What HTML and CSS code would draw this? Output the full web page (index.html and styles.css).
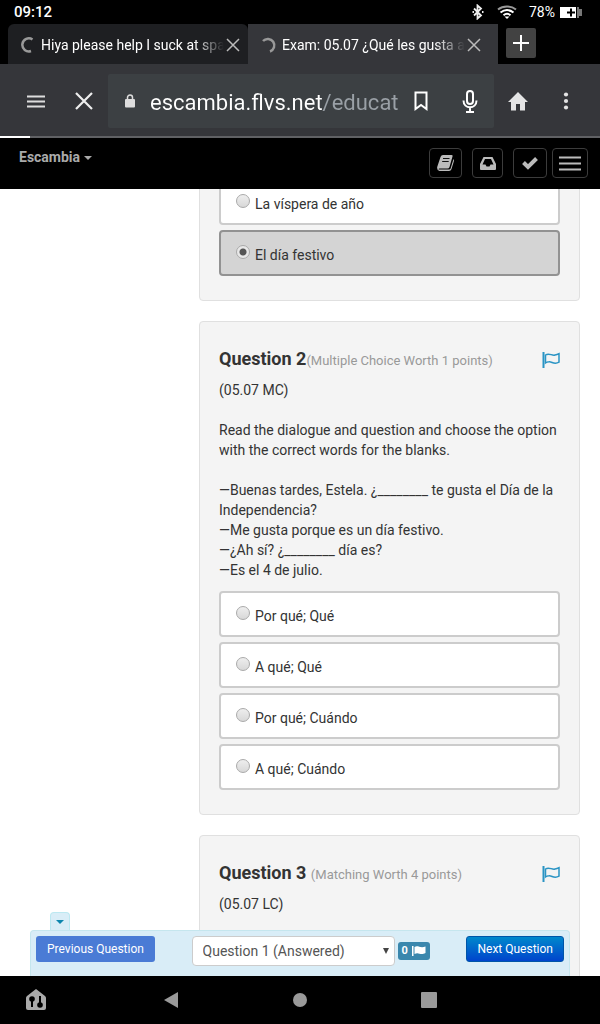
FILE: index.html
```html
<!DOCTYPE html>
<html lang="en">
<head>
    <title>Exam: 05.07 ¿Qué les gusta a...</title>
    <meta charset="UTF-8">
    <meta name="viewport" content="width=device-width, initial-scale=1.0">
    <link rel="stylesheet" href="styles.css">
</head>
<body>
    <div class="status-bar">
        <span class="clock">09:12</span>
        <svg class="bluetooth" width="12" height="16" viewBox="0 0 12 16" fill="none" stroke="#eee" stroke-width="1.800"><path d="M2 4.500l7 7-3.500 3V1.500l3.500 3-7 7"/><path d="M.5 8h1.500M10 8h1.500"/></svg>
        <svg class="wifi" width="20" height="14" viewBox="0 0 20 14" fill="none" stroke="#fff" stroke-width="2"><path stroke="#999" d="M1 4.500c5-4 13-4 18 0"/><path d="M3.500 7.500c4-3 9-3 13 0M6.500 10.300c2-1.700 5-1.700 7 0"/><path fill="#fff" stroke="none" d="M7.500 11.500h5L10 14z"/></svg>
        <span class="battery-text">78%</span>
        <svg width="22" height="11" viewBox="0 0 22 11"><path fill="#fff" d="M0 0h16v11H0z"/><path fill="#777" d="M17 0h2v2h3v7h-3v2h-2z"/><path stroke="#000" stroke-width="2" d="M7 5.500h8M11 1.500v8"/></svg>
    </div>

    <div class="tab-bar">
        <div class="tab">
            <svg class="spinner" width="16" height="16" viewBox="0 0 16 16" fill="none" stroke="#999" stroke-width="2.500"><path d="M12.500 2.500A6.500 6.500 0 1 0 11 14"/></svg>
            <span class="tab-title">Hiya please help I suck at spa</span>
            <button class="tab-close" aria-label="Close tab"><svg width="14" height="14" viewBox="0 0 14 14" stroke="#bbb" stroke-width="1.500"><path d="M1 1l12 12M13 1L1 13"/></svg></button>
        </div>
        <div class="tab active">
            <svg class="spinner" width="16" height="16" viewBox="0 0 16 16" fill="none" stroke="#999" stroke-width="2.500"><path d="M2 4A6.500 6.500 0 1 1 9 14.500"/></svg>
            <span class="tab-title">Exam: 05.07 ¿Qué les gusta a</span>
            <button class="tab-close" aria-label="Close tab"><svg width="14" height="14" viewBox="0 0 14 14" stroke="#bbb" stroke-width="1.500"><path d="M1 1l12 12M13 1L1 13"/></svg></button>
        </div>
        <button class="new-tab" aria-label="New tab"><svg width="16" height="16" viewBox="0 0 16 16" stroke="#fff" stroke-width="2"><path d="M0 8h16M8 0v16"/></svg></button>
    </div>

    <div class="toolbar">
        <button class="tool" aria-label="Menu"><svg width="18" height="13" viewBox="0 0 18 13" stroke="#ddd" stroke-width="2"><path d="M0 1.500h18M0 6.500h18M0 11.500h18"/></svg></button>
        <button class="tool" aria-label="Stop loading"><svg width="18" height="18" viewBox="0 0 18 18" stroke="#eee" stroke-width="2.200"><path d="M1 1l16 16M17 1L1 17"/></svg></button>
        <div class="address">
            <svg class="lock" width="10" height="14" viewBox="0 0 10 14"><path fill="none" stroke="#ddd" stroke-width="1.500" d="M2.500 6V3.500a2.500 2.500 0 0 1 5 0V6"/><rect y="5" width="10" height="8.500" rx="1" fill="#ddd"/></svg>
            <input class="url" type="text" aria-label="Address" value="escambia.flvs.net/educat">
            <button class="bookmark" aria-label="Bookmark"><svg width="14" height="20" viewBox="0 0 14 20" fill="none" stroke="#fff" stroke-width="2"><path d="M1.500 1.500h11v16.500L7 14l-5.500 4z"/></svg></button>
            <button class="mic" aria-label="Voice search"><svg width="16" height="23" viewBox="0 0 16 23" fill="none" stroke="#fff" stroke-width="2"><rect x="5" y="1" width="6" height="13" rx="3"/><path d="M1.500 10.500c0 9 13 9 13 0M8 17v5M4 22h8"/></svg></button>
        </div>
        <button class="tool" aria-label="Home"><svg width="20" height="19" viewBox="0 0 20 19" fill="#e4e4e4"><path d="M10 0l10 10h-3v8.500h-5V12H8v6.500H3V10H0z"/></svg></button>
        <button class="tool" aria-label="More"><svg width="6" height="18" viewBox="0 0 6 18" fill="#e4e4e4"><circle cx="3" cy="2.500" r="2.100"/><circle cx="3" cy="9" r="2.100"/><circle cx="3" cy="15.500" r="2.100"/></svg></button>
    </div>
    <div class="progress"><div class="progress-fill"></div></div>

    <nav class="site-nav">
        <a class="brand" href="#">Escambia <span class="caret"></span></a>
        <button class="nav-button book" aria-label="Lessons"><svg width="17" height="16" viewBox="0 0 17 16"><path fill="#bbb" d="M6 0h8.500q1.500 0 1 1.500L12.500 12q-.5 1.500-2 1.500H2.500q-1.200 0-.8 1H12q1.200 0 1.600-1L16.500 4q.8 1 .3 2.500L14.500 14q-.6 2-2.500 2H2.500Q-.3 15.500.2 12L3.500 2Q4.200 0 6 0z"/><path stroke="#111" d="M6 3.500h6.500M5.200 6.500h6.500"/></svg></button>
        <button class="nav-button" aria-label="Inbox"><svg width="16" height="13" viewBox="0 0 16 13"><path fill="#bbb" fill-rule="evenodd" d="M3.500 0h9L16 7v5q0 1-1 1H1q-1 0-1-1V7zM5 2L2.500 7.500h3l1 2h3l1-2h3L11 2z"/></svg></button>
        <button class="nav-button check" aria-label="Assessments"><svg width="16" height="13" viewBox="0 0 16 13" fill="none" stroke="#bbb" stroke-width="4"><path d="M1.500 5.500L6 10l8.500-8.500"/></svg></button>
        <button class="nav-button menu" aria-label="Menu"><svg width="22" height="15" viewBox="0 0 22 15" stroke="#bbb" stroke-width="2"><path d="M0 1.500h22M0 7.500h22M0 13.500h22"/></svg></button>
    </nav>

    <main class="page">
        <div class="question-list">
            <section class="question first">
                <label class="option"><input type="radio" name="q1"> <span>La víspera de año</span></label>
                <label class="option selected"><input type="radio" name="q1" checked> <span>El día festivo</span></label>
            </section>

            <section class="question">
                <header class="question-header">
                    <h2>Question 2<small>(Multiple Choice Worth 1 points)</small></h2>
                    <button class="flag" aria-label="Flag question 2"><svg width="18" height="16" viewBox="0 0 18 16" fill="none" stroke="#2a94c4" stroke-width="1.500"><path stroke-width="2" d="M1.500 0v16"/><path d="M3.500 3C7 .5 10 4 13 3q2-.2 4-1.300v8.500c-5 3-7-.8-10-.4q-2 .2-3.500 1.200z"/></svg></button>
                </header>
                <p>(05.07 MC)</p>
                <p>Read the dialogue and question and choose the option with the correct words for the blanks.</p>
                <p>—Buenas tardes, Estela. ¿________ te gusta el Día de la Independencia?<br>
                —Me gusta porque es un día festivo.<br>
                —¿Ah sí? ¿________ día es?<br>
                —Es el 4 de julio.</p>
                <div class="options">
                    <label class="option"><input type="radio" name="q2"> <span>Por qué; Qué</span></label>
                    <label class="option"><input type="radio" name="q2"> <span>A qué; Qué</span></label>
                    <label class="option"><input type="radio" name="q2"> <span>Por qué; Cuándo</span></label>
                    <label class="option"><input type="radio" name="q2"> <span>A qué; Cuándo</span></label>
                </div>
            </section>

            <section class="question last">
                <header class="question-header">
                    <h2>Question 3 <small>(Matching Worth 4 points)</small></h2>
                    <button class="flag" aria-label="Flag question 3"><svg width="18" height="16" viewBox="0 0 18 16" fill="none" stroke="#2a94c4" stroke-width="1.500"><path stroke-width="2" d="M1.500 0v16"/><path d="M3.500 3C7 .5 10 4 13 3q2-.2 4-1.300v8.500c-5 3-7-.8-10-.4q-2 .2-3.500 1.200z"/></svg></button>
                </header>
                <p>(05.07 LC)</p>
            </section>
        </div>

        <!-- question navigator, stays over the scrolled questions -->
        <div class="dock">
            <button class="dock-toggle" aria-label="Collapse"><span class="caret"></span></button>
            <div class="dock-bar">
                <button class="dock-button previous">Previous Question</button>
                <div class="jump">
                    <select aria-label="Go to question">
                        <option>Question 1 (Answered)</option>
                        <option>Question 2</option>
                        <option>Question 3</option>
                    </select>
                    <span class="badge">0 <svg width="14" height="10" viewBox="0 0 14 10" fill="#fff"><path d="M0 0h1.500v10H0zM2.500 1C6-1 8 2.500 13.500.5V7C8 10 7 5.500 2.500 8z"/></svg></span>
                </div>
                <button class="dock-button next">Next Question</button>
            </div>
        </div>
    </main>

    <div class="android-nav">
        <button class="controls" aria-label="Home controls"><svg width="22" height="22" viewBox="0 0 22 22"><path fill="#aaa" d="M11 0l9 7q1 1 1 2v10q0 2-2 2H3q-2 0-2-2V9q0-1 1-2z"/><path stroke="#000" stroke-width="2" d="M7 10v8M15 7v9"/><circle cx="7" cy="10" r="2.800"/><circle cx="15" cy="16" r="2.800"/></svg></button>
        <button aria-label="Back"><svg width="16" height="16" viewBox="0 0 16 16" fill="#999"><path d="M15 0v16L1 8z"/></svg></button>
        <button aria-label="Home"><svg width="16" height="16" viewBox="0 0 16 16" fill="#999"><circle cx="8" cy="8" r="7"/></svg></button>
        <button aria-label="Recent apps"><svg width="16" height="16" viewBox="0 0 16 16" fill="#999"><rect width="16" height="16" rx="1"/></svg></button>
    </div>
</body>
</html>
```
FILE: styles.css
```css
* { box-sizing: border-box; }
body {
    margin: 0;
    height: 100vh;
    display: flex;
    flex-direction: column;
    overflow: hidden;
    background: #fff;
    color: #333;
    font: 14px/20px Roboto, Arial, sans-serif;
}
button { display: flex; align-items: center; justify-content: center; margin: 0; padding: 0; border: 0; background: none; font: inherit; cursor: pointer; }
svg { flex: none; }

/* Android status bar */
.status-bar { display: flex; align-items: center; height: 24px; padding: 0 18px 0 14px; background: #000; color: #fff; flex: none; }
.clock { flex: 1; font-size: 15px; font-weight: 500; }
.bluetooth { margin-right: 13px; }
.wifi { margin-right: 12px; }
.battery-text { margin-right: 5px; }

/* browser tabs */
.tab-bar { display: flex; height: 40px; padding-left: 8px; background: #000; flex: none; }
.tab { display: flex; align-items: center; flex: 0 1 240px; min-width: 0; padding: 2px 8px 0 12px; background: #1e1f22; border-radius: 6px 6px 0 0; color: #fff; }
.tab.active { flex-basis: 250px; padding-left: 13px; padding-right: 17px; background: #35363a; border-radius: 0; }
.spinner { margin-right: 5px; }
.tab-title { flex: 1; min-width: 0; overflow: hidden; white-space: nowrap; -webkit-mask-image: linear-gradient(to left, transparent, #000 30px); mask-image: linear-gradient(to left, transparent, #000 30px); }
.tab-close { margin-left: 2px; }
.new-tab { width: 30px; height: 30px; margin: 4px 0 0 8px; background: #424242; border-radius: 2px; }

/* browser toolbar */
.toolbar { display: flex; align-items: center; height: 72px; padding: 2px 10px 0 12px; background: #35363a; flex: none; }
.tool { width: 48px; height: 48px; flex: none; }
.address { display: flex; align-items: center; flex: 1; min-width: 0; height: 54px; padding: 0 16px 0 17px; background: #3c4043; border-radius: 2px; }
.lock { margin-right: 15px; }
.url {
    flex: 1;
    min-width: 0;
    padding: 4px 0 0;
    border: 0;
    outline: 0;
    font: 22px/30px Roboto, Arial, sans-serif;
    color: transparent;
    background: linear-gradient(to right, #fff 173px, #9aa0a6 173px);
    -webkit-background-clip: text;
    background-clip: text;
}
.bookmark { margin: 0 34px 0 14px; }
.progress { height: 2px; background: #606164; flex: none; }
.progress-fill { width: 5%; height: 100%; background: #fff; }

/* site navbar */
.site-nav { display: flex; align-items: center; height: 51px; padding: 0 12px 1px 19px; background: #000; flex: none; }
.brand { flex: 1; padding-bottom: 12px; color: #aaa; font-weight: bold; text-decoration: none; }
.caret { display: inline-block; border: 4px solid transparent; border-top-color: currentColor; border-bottom: 0; vertical-align: middle; }
.nav-button { width: 31px; height: 30px; margin-right: 10px; border: 1px solid #3c3c3c; border-radius: 4px; }
.nav-button.book { width: 33px; }
.nav-button.check { width: 34px; margin-right: 5px; }
.nav-button.menu { width: 36px; margin-right: 0; }

/* exam page */
.page { position: relative; flex: 1; min-height: 0; overflow: hidden; }
.question-list { margin: -30px 20px 0 199px; }
.question { margin-bottom: 20px; padding: 28px 19px 24px; background: #f4f4f4; border: 1px solid #e0e0e0; border-radius: 4px; }
.question.first { padding-top: 19px; }
.question.last { padding-bottom: 80px; }
.question-header { display: flex; align-items: center; justify-content: space-between; height: 20px; margin-bottom: 10px; }
.question h2 { margin: 0; font-size: 18px; line-height: 20px; }
.question small { font-size: 13px; font-weight: normal; color: #999; }
.question p { margin: 0 0 20px; }
.options { margin-top: -9px; }
.option { display: flex; align-items: flex-start; height: 46px; margin-bottom: 5px; padding: 13px 15px 0; background: #fff; border: 2px solid #ccc; border-radius: 4px; }
.option:last-child { margin-bottom: 0; }
.option.selected { background: #d4d4d4; border-color: #929292; }
.option input { appearance: none; flex: none; width: 14px; height: 14px; margin: 0 5px 0 0; border: 1px solid #aaa; border-radius: 50%; background: linear-gradient(#eee, #d8d8d8); }
.option input:checked { background: radial-gradient(circle, #555 3px, #e8e8e8 4px); }

/* dock */
.dock { position: absolute; left: 30px; right: 30px; bottom: 0; }
.dock-toggle { width: 20px; height: 18px; margin-left: 20px; color: #0e86ae; background: #d9edf7; border: 1px solid #bce8f1; border-bottom: 0; border-radius: 4px 4px 0 0; }
.dock-bar { display: flex; justify-content: space-between; align-items: flex-start; height: 46px; padding: 5px 5px 0; background: #d9edf7; border: 1px solid #c5e6ee; border-bottom: 0; border-radius: 4px 4px 0 0; }
.dock-button { height: 26px; padding: 0 11px; border-radius: 3px; color: #fff; font-size: 12px; }
.previous { background: #4a7bd5; }
.next { background: linear-gradient(#0088cc, #0044cc); border: 1px solid #0055a8; padding: 0 10px; }
.jump { display: flex; align-items: center; gap: 3px; }
.jump select {
    width: 203px;
    height: 30px;
    padding: 0 10px;
    border: 1px solid #ccc;
    border-radius: 4px;
    appearance: none;
    color: #555;
    font: inherit;
    background: #fff url("data:image/svg+xml,%3Csvg xmlns='http://www.w3.org/2000/svg' width='6' height='6'%3E%3Cpath d='M0 0h6L3 6z' fill='%23444'/%3E%3C/svg%3E") no-repeat right 5px center;
}
.badge { display: flex; align-items: center; gap: 4px; height: 18px; padding: 0 4px; background: #3a87ad; border-radius: 3px; color: #fff; font-size: 11px; font-weight: bold; }

/* Android navigation */
.android-nav { display: flex; align-items: center; gap: 107px; height: 48px; padding: 0 25px; background: #000; flex: none; }
.android-nav button { flex: none; width: 22px; height: 48px; }
.android-nav .controls { margin-right: 6px; }

@media (max-width: 500px) {
    .android-nav { gap: 0; justify-content: space-between; }
}
```
